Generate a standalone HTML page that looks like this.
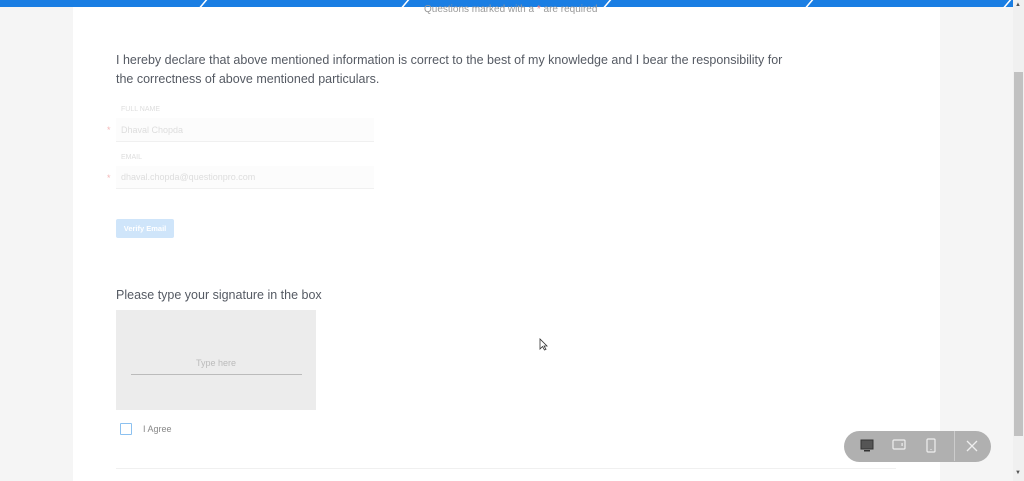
<!DOCTYPE html>
<html><head><style>
*{margin:0;padding:0;box-sizing:border-box}
body{width:1024px;height:481px;overflow:hidden;background:#f5f5f5;font-family:"Liberation Sans",sans-serif;position:relative}
.abs{position:absolute}
.card{left:73px;top:0;width:867px;height:481px;background:#fff}
.bar{left:0;top:0;width:1013px;height:7px;background:#1a7ee3}
.sl{top:0;width:2px;height:8px;background:#fff;transform:skewX(-40deg)}
.t{color:#555a63}
</style></head><body>
<div class="abs card"></div>
<div class="abs bar"></div>
<div class="abs sl" style="left:202px"></div>
<div class="abs sl" style="left:404px"></div>
<div class="abs sl" style="left:606px"></div>
<div class="abs sl" style="left:808px"></div>
<div class="abs sl" style="left:1006px"></div>
<div class="abs" style="left:424px;top:4px;font-size:10px;color:#999;line-height:12px">Questions marked with a <span style="color:#f08080">*</span> are required</div>
<div class="abs t" style="left:116px;top:51px;font-size:12.5px;line-height:19px;width:675px">I hereby declare that above mentioned information is correct to the best of my knowledge and I bear the responsibility for the correctness of above mentioned particulars.</div>
<div class="abs" style="left:121px;top:106px;font-size:7px;color:#ddd">FULL NAME</div>
<div class="abs" style="left:107px;top:125px;font-size:9px;color:#f3b8b8">*</div>
<div class="abs" style="left:116px;top:118px;width:258px;height:24px;background:#fcfcfc;border-bottom:1px solid #f0f0f0;font-size:9px;color:#ddd;padding:7px 5px">Dhaval Chopda</div>
<div class="abs" style="left:121px;top:154px;font-size:7px;color:#ddd">EMAIL</div>
<div class="abs" style="left:107px;top:173px;font-size:9px;color:#f3b8b8">*</div>
<div class="abs" style="left:116px;top:166px;width:258px;height:23px;background:#fcfcfc;border-bottom:1px solid #f0f0f0;font-size:9px;color:#ddd;padding:6px 5px">dhaval.chopda@questionpro.com</div>
<div class="abs" style="left:116px;top:219px;width:58px;height:19px;background:#cfe5fa;border-radius:2px;font-size:7.5px;color:#fff;text-align:center;line-height:19px;font-weight:bold">Verify Email</div>
<div class="abs t" style="left:116px;top:288px;font-size:12.5px">Please type your signature in the box</div>
<div class="abs" style="left:116px;top:310px;width:200px;height:100px;background:#ececec"></div>
<div class="abs" style="left:116px;top:358px;width:200px;text-align:center;font-size:9px;color:#bbb">Type here</div>
<div class="abs" style="left:131px;top:374px;width:171px;height:1px;background:#bbb"></div>
<div class="abs" style="left:120px;top:423px;width:12px;height:12px;border:1px solid #8cc1f0;border-radius:1px"></div>
<div class="abs" style="left:143px;top:424px;font-size:9px;color:#888">I Agree</div>
<div class="abs" style="left:116px;top:468px;width:780px;height:1px;background:#f0f0f0"></div>
<div class="abs" style="left:1013px;top:0;width:11px;height:481px;background:#f0f0f0"></div>
<div class="abs" style="left:1014px;top:72px;width:9px;height:364px;background:#c1c1c1"></div>
<div class="abs" style="left:1015px;top:2px;font-size:6px;color:#555">▲</div>
<div class="abs" style="left:1015px;top:470px;font-size:6px;color:#555">▼</div>
<div class="abs" style="left:844px;top:431px;width:147px;height:31px;background:#b0b0b0;border-radius:16px"></div>
<div class="abs" style="left:954px;top:431px;width:1px;height:30px;background:#ccc"></div>
<svg class="abs" style="left:860px;top:439px" width="15" height="14"><rect x="1" y="1" width="12" height="9" fill="#555" stroke="#333" stroke-width="1"/><rect x="4" y="11" width="6" height="1.5" fill="#333"/></svg>
<svg class="abs" style="left:892px;top:439px" width="15" height="12"><rect x="1" y="1" width="12" height="9" rx="1" fill="none" stroke="#eee" stroke-width="1.2"/><rect x="9.5" y="4" width="1.2" height="3" fill="#eee"/></svg>
<svg class="abs" style="left:926px;top:438px" width="10" height="16"><rect x="1" y="1" width="8" height="13" rx="1" fill="none" stroke="#eee" stroke-width="1.2"/><rect x="4.5" y="11" width="1" height="1" fill="#eee"/></svg>
<svg class="abs" style="left:966px;top:440px" width="12" height="12"><path d="M1 1L11 11M11 1L1 11" stroke="#eee" stroke-width="1.3"/></svg>
<svg class="abs" style="left:539px;top:338px" width="9" height="13"><path d="M1 1V11L3.5 8.5L5.5 12L7 11.3L5 8H8Z" fill="#fff" stroke="#333" stroke-width=".8"/></svg>
</body></html>
